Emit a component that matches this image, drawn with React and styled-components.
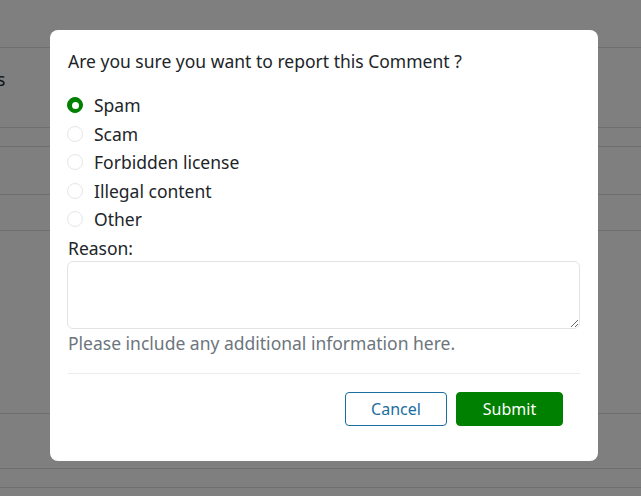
import React from 'react';
import styled, { createGlobalStyle } from 'styled-components';

const GlobalStyle = createGlobalStyle`
  html, body {
    margin: 0;
    padding: 0;
    background: #fff;
    font-family: "Noto Sans", "Open Sans", sans-serif;
    color: #212529;
  }
  * { box-sizing: border-box; }
`;

const Page = styled.div`
  position: relative;
  width: 641px;
  height: 496px;
  overflow: hidden;
  background: #fff;
`;

const Row = styled.div`
  height: ${(p) => p.h}px;
  border-bottom: 1px solid #dcdcdc;
  font-size: 17.5px;
  overflow: hidden;
  white-space: nowrap;
`;

const RowText = styled.span`
  display: block;
  margin: 19px 0 0 -3px;
  line-height: 24px;
  color: #212529;
`;

const Backdrop = styled.div`
  position: absolute;
  inset: 0;
  background: rgba(0, 0, 0, 0.5);
`;

const Modal = styled.div`
  position: absolute;
  left: 50px;
  top: 30px;
  width: 548px;
  height: 431px;
  background: #fff;
  border-radius: 8px;
  padding: 19px 18px 0 17px;
  display: flex;
  flex-direction: column;
  font-size: 17.5px;
`;

const Title = styled.div`
  line-height: 24px;
  padding-left: 1px;
`;

const Options = styled.div`
  margin-top: 20px;
  display: flex;
  flex-direction: column;
  gap: 4.5px;
`;

const Option = styled.label`
  display: flex;
  align-items: center;
  gap: 11px;
  line-height: 24px;
`;

const Radio = styled.span`
  width: 16px;
  height: 16px;
  border-radius: 50%;
  flex: none;
  background: ${(p) => (p.checked ? '#008000' : '#fff')};
  border: 1px solid ${(p) => (p.checked ? '#008000' : '#e6e6e6')};
  display: flex;
  align-items: center;
  justify-content: center;
  &::after {
    content: '';
    display: ${(p) => (p.checked ? 'block' : 'none')};
    width: 7px;
    height: 7px;
    border-radius: 50%;
    background: #fff;
  }
`;

const Label = styled.div`
  margin-top: 5px;
  line-height: 24px;
  padding-left: 1px;
`;

const TextArea = styled.textarea`
  margin-top: 1px;
  width: 513px;
  height: 68px;
  border: 1px solid #e3e3e3;
  border-radius: 6px;
  font-family: inherit;
  font-size: 16px;
  resize: vertical;
  outline: none;
  display: block;
`;

const Help = styled.div`
  margin-top: 2px;
  line-height: 24px;
  color: #6c757d;
  padding-left: 1px;
`;

const Divider = styled.hr`
  margin: 18px 0 0 1px;
  border: 0;
  border-top: 1px solid #ececec;
  width: 512px;
`;

const Footer = styled.div`
  margin-top: 18px;
  display: flex;
  justify-content: flex-end;
  gap: 9px;
  padding-right: 17px;
`;

const Button = styled.button`
  height: 34px;
  width: ${(p) => p.w}px;
  border-radius: 4px;
  font-family: inherit;
  font-size: 16px;
  cursor: pointer;
  border: 1px solid ${(p) => (p.primary ? '#008000' : '#1a6ea0')};
  background: ${(p) => (p.primary ? '#008000' : '#fff')};
  color: ${(p) => (p.primary ? '#fff' : '#1a6ea0')};
`;

const options = ['Spam', 'Scam', 'Forbidden license', 'Illegal content', 'Other'];

export default function App() {
  return (
    <Page>
      <GlobalStyle />
      <Row h={48} />
      <Row h={80}><RowText>s</RowText></Row>
      <Row h={19} />
      <Row h={48} />
      <Row h={36} />
      <Row h={183} />
      <Row h={55} />
      <Row h={19} />
      <Backdrop />
      <Modal>
        <Title>Are you sure you want to report this Comment ?</Title>
        <Options>
          {options.map((o, i) => (
            <Option key={o}>
              <Radio checked={i === 0} />
              {o}
            </Option>
          ))}
        </Options>
        <Label>Reason:</Label>
        <TextArea />
        <Help>Please include any additional information here.</Help>
        <Divider />
        <Footer>
          <Button w={102}>Cancel</Button>
          <Button primary w={107}>Submit</Button>
        </Footer>
      </Modal>
    </Page>
  );
}
